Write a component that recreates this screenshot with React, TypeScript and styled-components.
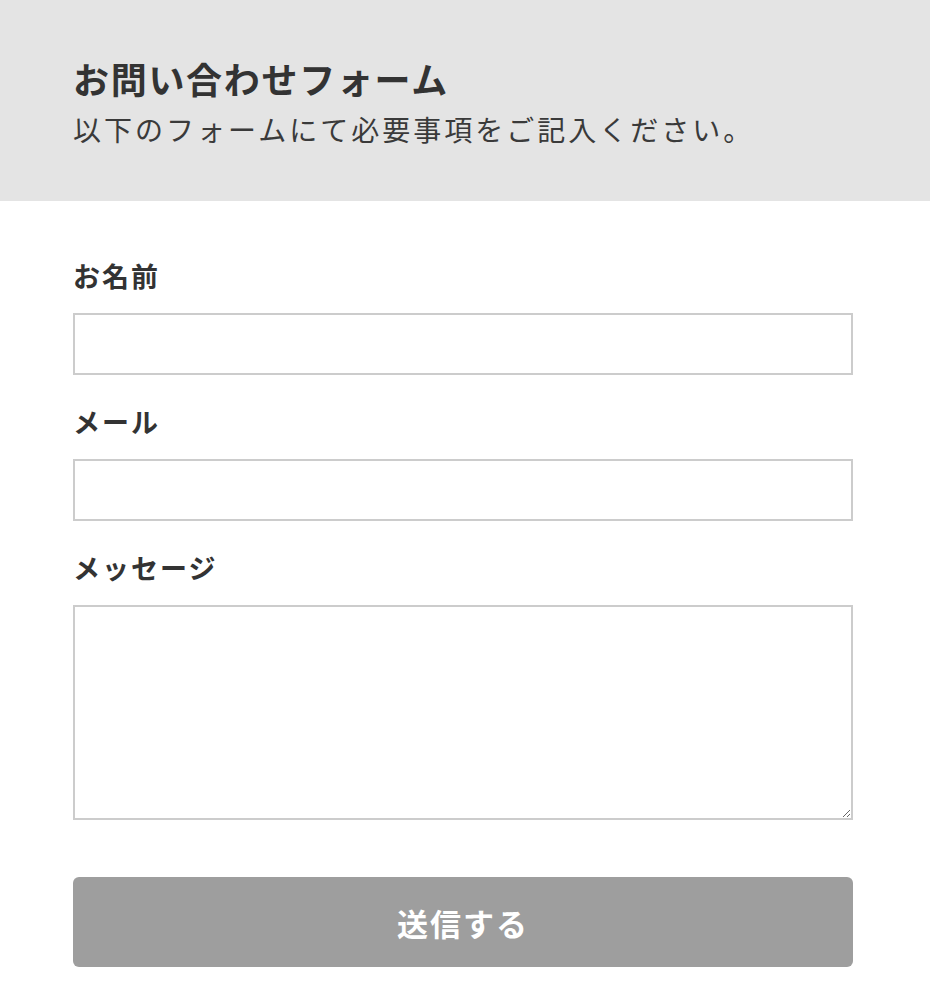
import React from "react";
import styled, { createGlobalStyle } from "styled-components";

const Global = createGlobalStyle`
  html, body { margin: 0; padding: 0; background: #ffffff; }
  body {
    font-family: "Noto Sans CJK JP", "Noto Sans", sans-serif;
    color: #333333;
  }
  * { box-sizing: border-box; }
`;

const Page = styled.div`
  width: 930px;
  min-height: 1007px;
  background: #ffffff;
`;

const Header = styled.header`
  background: #e4e4e4;
  height: 201px;
  padding: 56px 73px 0;
`;

const Title = styled.h1`
  margin: 0;
  font-size: 36px;
  line-height: 44px;
  font-weight: 700;
  letter-spacing: 1.7px;
  color: #333333;
`;

const Subtitle = styled.p`
  margin: 11px 0 0;
  font-size: 28px;
  line-height: 36px;
  font-weight: 400;
  letter-spacing: 3px;
  color: #3a3a3a;
`;

const Form = styled.form`
  display: flex;
  flex-direction: column;
  width: 780px;
  margin: 0 0 0 73px;
  padding-top: 57px;
`;

const Field = styled.div<{ $first?: boolean }>`
  display: flex;
  flex-direction: column;
  gap: 19px;
  margin-top: ${(p) => (p.$first ? "0" : "29px")};
`;

const Label = styled.label`
  font-size: 27px;
  line-height: 36px;
  font-weight: 700;
  letter-spacing: 2px;
  color: #333333;
`;

const Input = styled.input`
  width: 780px;
  height: 62px;
  border: 2px solid #cccccc;
  background: #ffffff;
  padding: 0 12px;
  font-size: 22px;
  font-family: inherit;
  outline: none;
`;

const TextArea = styled.textarea`
  width: 780px;
  height: 215px;
  border: 2px solid #cccccc;
  background: #ffffff;
  padding: 10px 12px;
  font-size: 22px;
  font-family: inherit;
  outline: none;
  resize: vertical;
  display: block;
`;

const Submit = styled.button`
  margin-top: 57px;
  width: 780px;
  height: 90px;
  border: none;
  border-radius: 6px;
  background: #9e9e9e;
  color: #ffffff;
  font-family: inherit;
  font-size: 31px;
  font-weight: 700;
  letter-spacing: 2px;
  cursor: pointer;
`;

export default function App() {
  return (
    <Page>
      <Global />
      <Header>
        <Title>お問い合わせフォーム</Title>
        <Subtitle>以下のフォームにて必要事項をご記入ください。</Subtitle>
      </Header>
      <Form onSubmit={(e) => e.preventDefault()}>
        <Field $first>
          <Label htmlFor="name">お名前</Label>
          <Input id="name" type="text" />
        </Field>
        <Field>
          <Label htmlFor="mail">メール</Label>
          <Input id="mail" type="email" />
        </Field>
        <Field>
          <Label htmlFor="msg">メッセージ</Label>
          <TextArea id="msg" />
        </Field>
        <Submit type="submit">送信する</Submit>
      </Form>
    </Page>
  );
}
